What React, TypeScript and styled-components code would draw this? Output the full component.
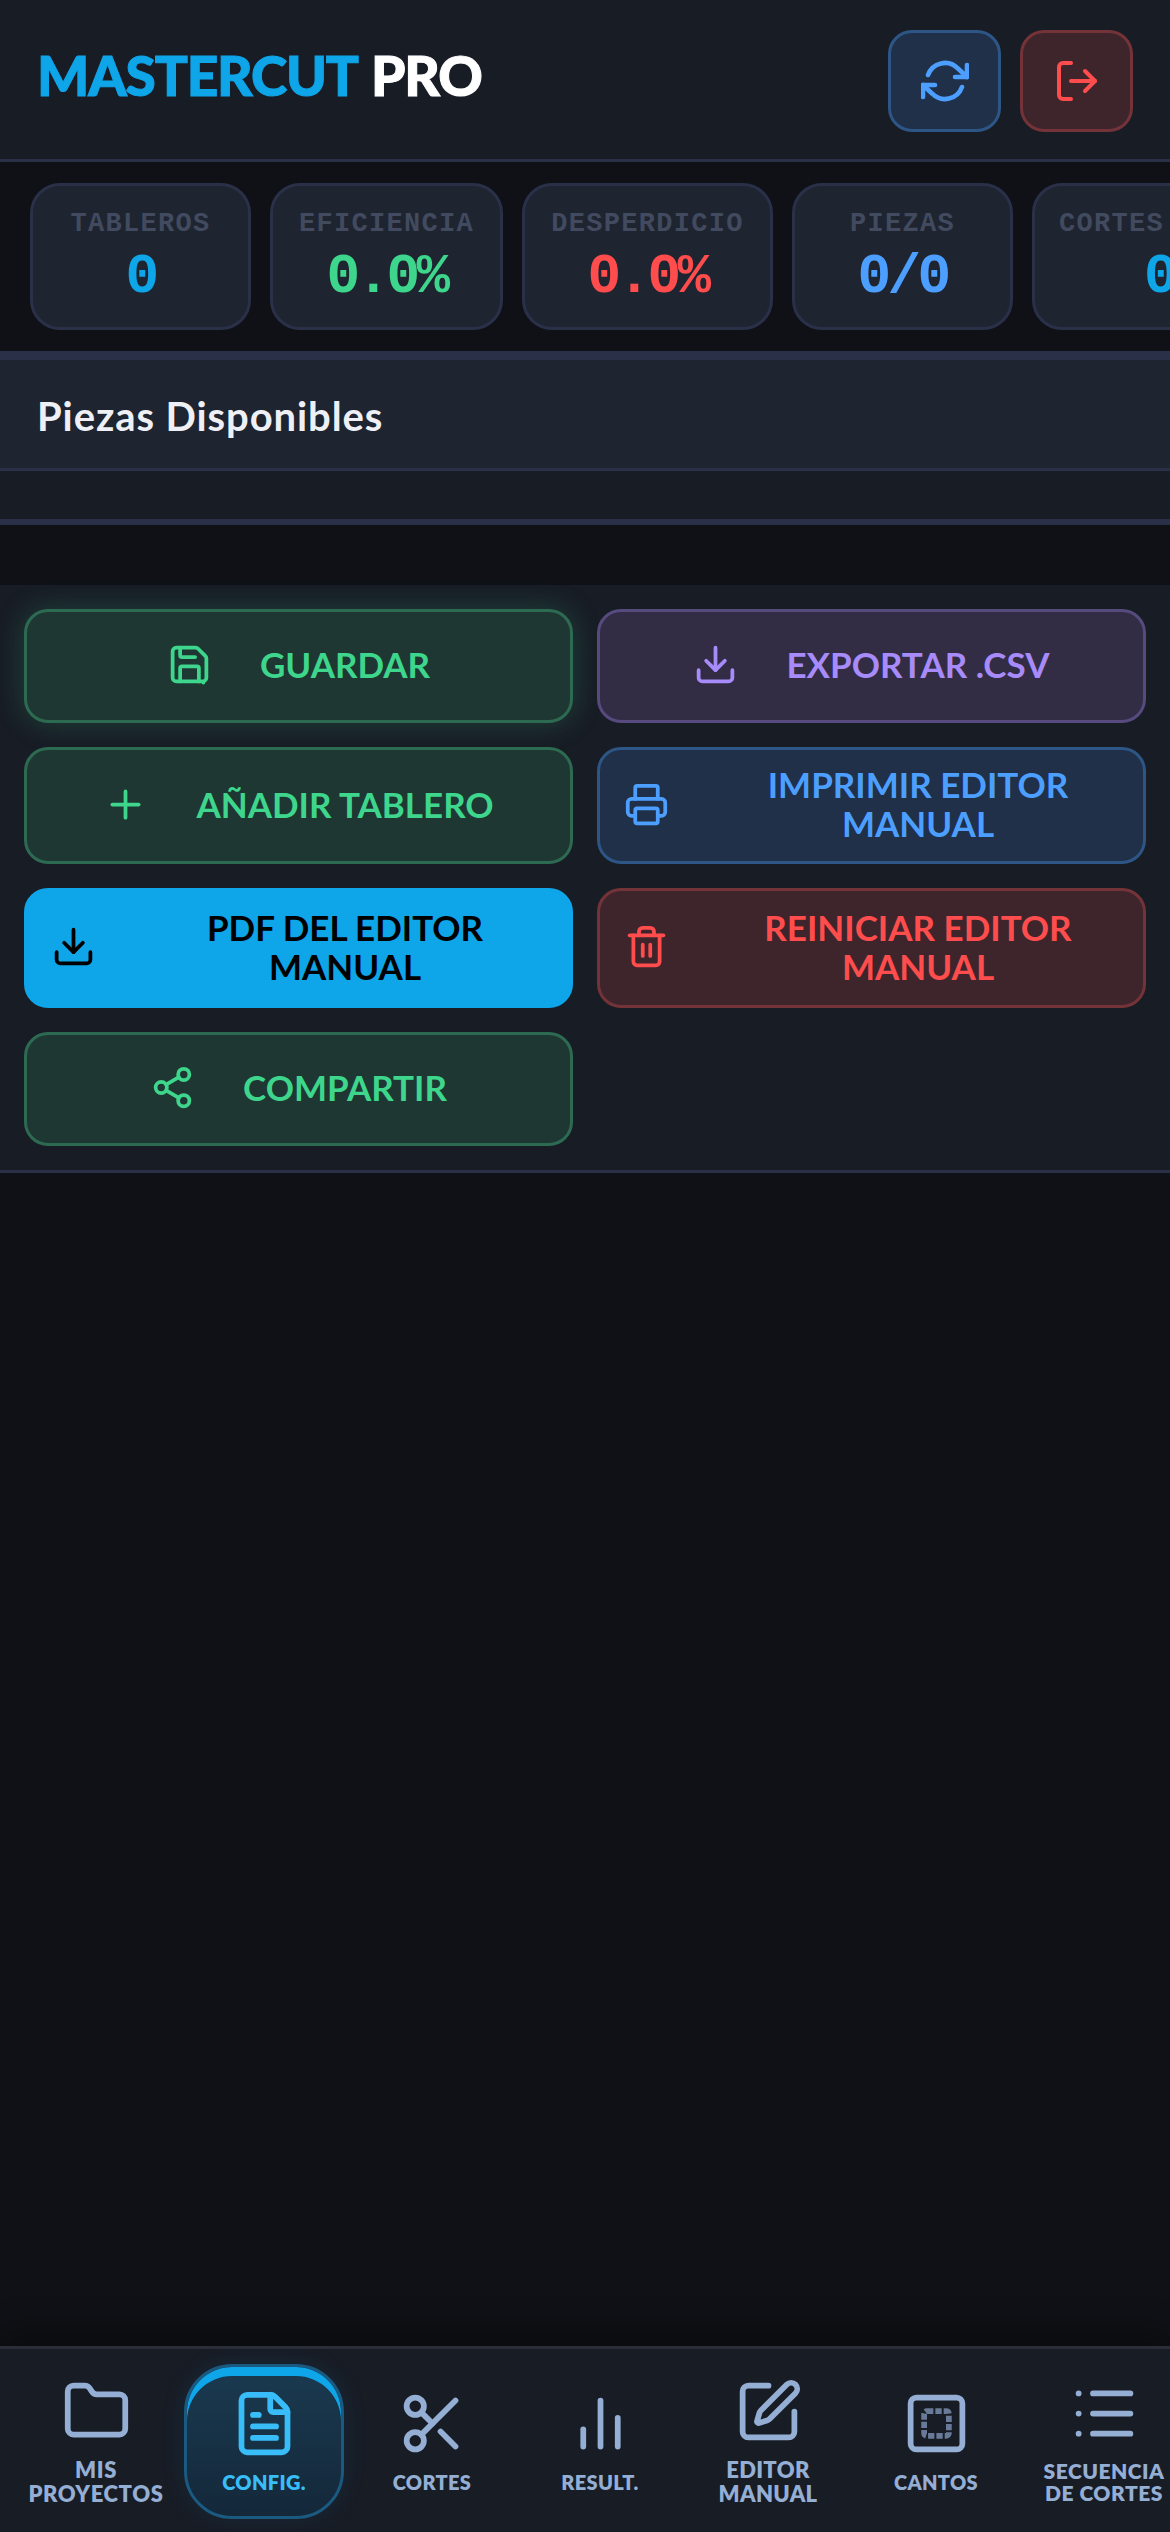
import React from "react"
import styled, { createGlobalStyle } from "styled-components"
import {
  Download,
  FileText,
  Folder,
  List,
  LogOut,
  Plus,
  Printer,
  Scissors,
  Share2,
  SquarePen,
  Trash2,
} from "lucide-react"

const SANS = `"Lato", "Noto Sans", sans-serif`
const MONO = `"Liberation Mono", "DejaVu Sans Mono", monospace`

const tones = {
  green: { fg: "#3dd68c", bg: "#1f3733", line: "#2d6a52" },
  purple: { fg: "#a78bfa", bg: "#322d45", line: "#564a7f" },
  blue: { fg: "#4d9fff", bg: "#1f3048", line: "#2d5686" },
  red: { fg: "#ff4d4d", bg: "#3e252c", line: "#743338" },
  solid: { fg: "#000000", bg: "#0ea5e9", line: "#0ea5e9" },
}
type Tone = keyof typeof tones

const GlobalStyle = createGlobalStyle`
  html, body {
    margin: 0;
    padding: 0;
    background: #0f1116;
  }
  * {
    box-sizing: border-box;
  }
`

const Page = styled.div`
  display: flex;
  flex-direction: column;
  height: 2532px;
  overflow: hidden;
  background: #0f1116;
  font-family: ${SANS};
`

const Header = styled.header`
  display: flex;
  align-items: center;
  justify-content: space-between;
  height: 162px;
  padding: 3px 37px 0;
  background: #181c25;
  border-bottom: 3px solid #2a3048;
`

const Logo = styled.h1`
  margin: 0 0 12px;
  font-size: 55px;
  font-weight: 900;
  letter-spacing: -1.2px;
  word-spacing: 3px;
  color: #0ea5e9;
  -webkit-text-stroke: 1px currentColor;
  span {
    color: #ffffff;
  }
`

const HeaderActions = styled.div`
  display: flex;
  gap: 19px;
`

const IconButton = styled.button<{ $tone: Tone }>`
  display: flex;
  align-items: center;
  justify-content: center;
  width: 113px;
  height: 102px;
  padding: 0;
  border-radius: 24px;
  border: 3px solid ${(p) => tones[p.$tone].line};
  background: ${(p) => tones[p.$tone].bg};
  color: ${(p) => tones[p.$tone].fg};
`

const StatStrip = styled.section`
  display: flex;
  gap: 19px;
  padding: 21px 0 21px 30px;
  overflow: hidden;
  border-bottom: 3px solid #2a3048;
`

const StatCard = styled.div<{ $width: number }>`
  flex: none;
  display: flex;
  flex-direction: column;
  align-items: center;
  justify-content: center;
  gap: 8px;
  width: ${(p) => p.$width}px;
  height: 147px;
  border-radius: 30px;
  border: 3px solid #2a3048;
  background: #1e2430;
`

const StatLabel = styled.div<{ $start?: boolean }>`
  align-self: ${(p) => (p.$start ? "flex-start" : "center")};
  padding-left: ${(p) => (p.$start ? 24 : 0)}px;
  font-family: ${MONO};
  font-size: 27px;
  line-height: 32px;
  font-weight: 700;
  letter-spacing: 1.3px;
  color: #414a5e;
`

const StatValue = styled.div<{ $color: string }>`
  font-family: ${MONO};
  font-size: 56px;
  line-height: 58px;
  font-weight: 700;
  letter-spacing: -3.6px;
  color: ${(p) => p.$color};
`

const PanelHead = styled.div`
  display: flex;
  align-items: center;
  height: 117px;
  padding: 0 37px;
  background: #1e2430;
  border-top: 6px solid #2a3048;
  border-bottom: 3px solid #2a3048;
`

const PanelTitle = styled.h2`
  margin: 4px 0 0;
  font-size: 40px;
  font-weight: 700;
  letter-spacing: 0.9px;
  color: #eef0f6;
`

const PanelBody = styled.div`
  height: 54px;
  background: #181c25;
  border-bottom: 6px solid #2a3048;
`

const Gap = styled.div`
  height: 60px;
`

const Actions = styled.section`
  display: grid;
  grid-template-columns: 1fr 1fr;
  grid-template-rows: 114px 117px 120px 114px;
  gap: 24px;
  padding: 24px;
  background: #181c25;
  border-bottom: 3px solid #2a3048;
`

const ActionButton = styled.button<{ $tone: Tone; $glow?: boolean }>`
  display: flex;
  align-items: center;
  justify-content: center;
  gap: 48px;
  padding: 0 24px 3px;
  border-radius: 24px;
  border: 3px solid ${(p) => tones[p.$tone].line};
  background: ${(p) => tones[p.$tone].bg};
  color: ${(p) => tones[p.$tone].fg};
  box-shadow: ${(p) => (p.$glow ? "0 0 30px rgba(61, 214, 140, 0.22)" : "none")};
  font-family: ${SANS};
  font-size: 35px;
  line-height: 39px;
  font-weight: 700;
  text-align: center;
  svg {
    flex: none;
  }
`

const Main = styled.main`
  flex: 1;
`

const Nav = styled.nav`
  position: relative;
  display: flex;
  align-items: center;
  gap: 8px;
  height: 186px;
  padding: 2px 0 0 16px;
  overflow: hidden;
  background: #181c25;
  border-top: 3px solid #2a2e38;
  box-shadow: 0 -14px 30px rgba(0, 0, 0, 0.35);
`

const NavItem = styled.button<{ $active?: boolean }>`
  flex: none;
  display: flex;
  flex-direction: column;
  align-items: center;
  justify-content: center;
  gap: 12px;
  width: 160px;
  height: 155px;
  padding: 0;
  border-radius: 48px;
  border: 3px solid ${(p) => (p.$active ? "#1a5a80" : "transparent")};
  background: ${(p) => (p.$active ? "linear-gradient(180deg, #1a3a50, #14283a)" : "transparent")};
  box-shadow: ${(p) =>
    p.$active ? "inset 0 9px 0 #0ea5e9, 0 0 24px rgba(14, 165, 233, 0.1)" : "none"};
  color: ${(p) => (p.$active ? "#38bdf8" : "#94aed4")};
  font-family: ${SANS};
`

const NavLabel = styled.span<{ $size?: number; $leading?: number; $spacing?: number }>`
  font-size: ${(p) => p.$size ?? 20}px;
  line-height: ${(p) => p.$leading ?? 24}px;
  font-weight: 800;
  letter-spacing: ${(p) => p.$spacing ?? 0.3}px;
  white-space: nowrap;
`

const IconSvg = styled.svg`
  display: block;
  fill: none;
  stroke: currentColor;
  stroke-linecap: round;
  stroke-linejoin: round;
`

const RefreshIcon = () => (
  <IconSvg width={48} height={48} viewBox="0 0 24 24" strokeWidth={2.3}>
    <path d="M23 4v6h-6" />
    <path d="M1 20v-6h6" />
    <path d="M3.51 9a9 9 0 0 1 14.85-3.36L23 10" />
    <path d="M1 14l4.64 4.36A9 9 0 0 0 20.49 15" />
  </IconSvg>
)

const SaveIcon = () => (
  <IconSvg width={45} height={45} viewBox="0 0 24 24" strokeWidth={2}>
    <path d="M15.2 3a2 2 0 0 1 1.4.6l3.8 3.8a2 2 0 0 1 .6 1.4V19a2 2 0 0 1-2 2H5a2 2 0 0 1-2-2V5a2 2 0 0 1 2-2z" />
    <path d="M17 21v-7a1 1 0 0 0-1-1H8a1 1 0 0 0-1 1v7" />
    <path d="M7 3v4a1 1 0 0 0 1 1h7" />
    <path d="M19.4 21.6h.01" />
  </IconSvg>
)

const BarsIcon = () => (
  <IconSvg width={69} height={69} viewBox="0 0 24 24" strokeWidth={2}>
    <path d="M18 20V10" />
    <path d="M12 20V4" />
    <path d="M6 20v-6" />
  </IconSvg>
)

const EdgesIcon = () => (
  <IconSvg width={69} height={69} viewBox="0 0 24 24" strokeWidth={2}>
    <rect x="3" y="3" width="18" height="18" rx="2" />
    <rect
      x="7.7"
      y="7.7"
      width="8.6"
      height="8.6"
      rx="1"
      strokeDasharray="2.2 0.7"
      strokeLinecap="butt"
      opacity={0.65}
    />
  </IconSvg>
)

const stats = [
  { label: "TABLEROS", value: "0", color: "#0ea5e9", width: 221 },
  { label: "EFICIENCIA", value: "0.0%", color: "#3dd68c", width: 233 },
  { label: "DESPERDICIO", value: "0.0%", color: "#ff4d4d", width: 251 },
  { label: "PIEZAS", value: "0/0", color: "#4d9fff", width: 221 },
  { label: "CORTES", value: "0", color: "#0ea5e9", width: 254, start: true },
]

const App = () => {
  return (
    <Page>
      <GlobalStyle />
      <Header>
        <Logo>
          MASTERCUT <span>PRO</span>
        </Logo>
        <HeaderActions>
          <IconButton $tone="blue">
            <RefreshIcon />
          </IconButton>
          <IconButton $tone="red">
            <LogOut size={48} strokeWidth={2} />
          </IconButton>
        </HeaderActions>
      </Header>

      <StatStrip>
        {stats.map((s) => (
          <StatCard key={s.label} $width={s.width}>
            <StatLabel $start={s.start}>{s.label}</StatLabel>
            <StatValue $color={s.color}>{s.value}</StatValue>
          </StatCard>
        ))}
      </StatStrip>

      <PanelHead>
        <PanelTitle>Piezas Disponibles</PanelTitle>
      </PanelHead>
      <PanelBody />
      <Gap />

      <Actions>
        <ActionButton $tone="green" $glow>
          <SaveIcon />
          GUARDAR
        </ActionButton>
        <ActionButton $tone="purple">
          <Download size={45} strokeWidth={2} />
          EXPORTAR .CSV
        </ActionButton>
        <ActionButton $tone="green">
          <Plus size={45} strokeWidth={2} />
          AÑADIR TABLERO
        </ActionButton>
        <ActionButton $tone="blue">
          <Printer size={45} strokeWidth={2} />
          IMPRIMIR EDITOR MANUAL
        </ActionButton>
        <ActionButton $tone="solid">
          <Download size={45} strokeWidth={2} />
          PDF DEL EDITOR MANUAL
        </ActionButton>
        <ActionButton $tone="red">
          <Trash2 size={45} strokeWidth={2} />
          REINICIAR EDITOR MANUAL
        </ActionButton>
        <ActionButton $tone="green">
          <Share2 size={45} strokeWidth={2} />
          COMPARTIR
        </ActionButton>
      </Actions>

      <Main />

      <Nav>
        <NavItem>
          <Folder size={69} strokeWidth={2} />
          <NavLabel $size={22} $spacing={0.6}>
            MIS
            <br />
            PROYECTOS
          </NavLabel>
        </NavItem>
        <NavItem $active>
          <FileText size={69} strokeWidth={2} />
          <NavLabel>CONFIG.</NavLabel>
        </NavItem>
        <NavItem>
          <Scissors size={69} strokeWidth={2} />
          <NavLabel>CORTES</NavLabel>
        </NavItem>
        <NavItem>
          <BarsIcon />
          <NavLabel>RESULT.</NavLabel>
        </NavItem>
        <NavItem>
          <SquarePen size={69} strokeWidth={2} />
          <NavLabel $size={22}>
            EDITOR
            <br />
            MANUAL
          </NavLabel>
        </NavItem>
        <NavItem>
          <EdgesIcon />
          <NavLabel>CANTOS</NavLabel>
        </NavItem>
        <NavItem>
          <List size={69} strokeWidth={2} />
          <NavLabel $size={21} $leading={22} $spacing={0.5}>
            SECUENCIA
            <br />
            DE CORTES
          </NavLabel>
        </NavItem>
      </Nav>
    </Page>
  )
}

export default App
